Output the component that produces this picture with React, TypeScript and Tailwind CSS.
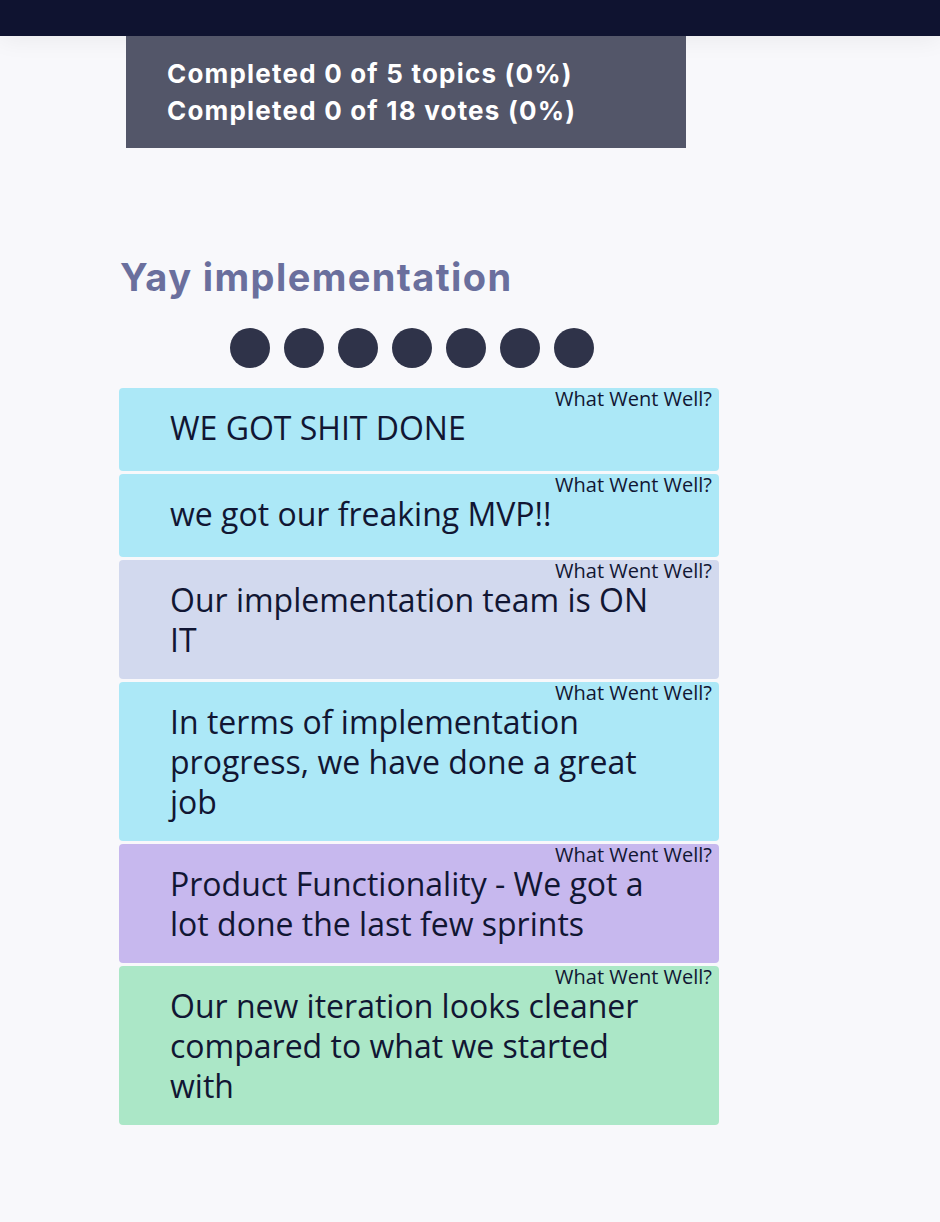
import React from "react";

const cards = [
  { text: "WE GOT SHIT DONE", bg: "bg-[#ace8f7]" },
  { text: "we got our freaking MVP!!", bg: "bg-[#ace8f7]" },
  { text: "Our implementation team is ON IT", bg: "bg-[#d2d9ee]" },
  { text: "In terms of implementation progress, we have done a great job", bg: "bg-[#ace8f7]" },
  { text: "Product Functionality - We got a lot done the last few sprints", bg: "bg-[#c7b8ee]" },
  { text: "Our new iteration looks cleaner compared to what we started with", bg: "bg-[#abe7c7]" },
];

export default function App() {
  return (
    <div className="min-h-[1222px] w-full bg-[#f8f8fb] font-['Open_Sans',sans-serif]">
      <div className="h-[36px] w-full bg-[#0f1330] shadow-[0_4px_24px_rgba(0,0,0,0.06)]" />
      <div className="ml-[126px] flex h-[112px] w-[560px] flex-col justify-center bg-[#535669] pl-[41px] font-['Inter',sans-serif] text-[26px] font-bold leading-[37px] tracking-[1.2px] text-white">
        <div>Completed 0 of 5 topics (0%)</div>
        <div>Completed 0 of 18 votes (0%)</div>
      </div>
      <div className="ml-[119px] mt-[106px] w-[600px]">
        <h1 className="pl-[1px] font-['Inter',sans-serif] text-[38px] font-bold leading-[46px] tracking-[1.4px] text-[#6a6f9d]">
          Yay implementation
        </h1>
        <div className="mt-[28px] flex gap-[14px] pl-[111px]">
          {Array.from({ length: 7 }).map((_, i) => (
            <div key={i} className="h-[40px] w-[40px] rounded-full bg-[#2f3349]" />
          ))}
        </div>
        <div className="mt-[20px] flex flex-col gap-[3px]">
          {cards.map((c, i) => (
            <div key={i} className={`${c.bg} min-h-[83px] rounded-[4px] pb-[19px]`}>
              <div className="flex h-[20px] justify-end pr-[7px] pt-[2px] text-[20px] leading-[18px] text-[#111633]">
                <span className="whitespace-nowrap">What Went Well?</span>
              </div>
              <div className="pl-[51px] pr-[50px] text-[32px] leading-[40px] text-[#111633]">
                {c.text}
              </div>
            </div>
          ))}
        </div>
      </div>
    </div>
  );
}
